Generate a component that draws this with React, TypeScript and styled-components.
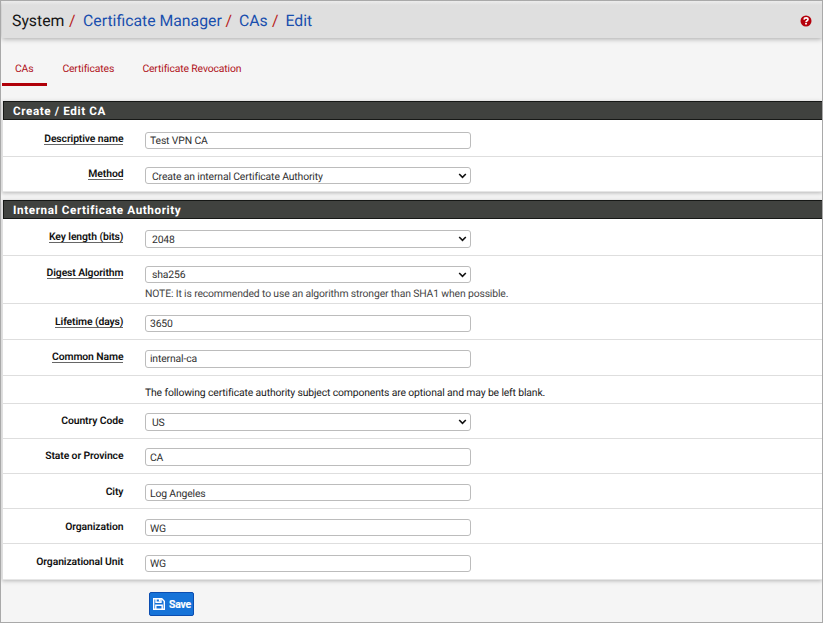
import React from "react";
import styled, { createGlobalStyle } from "styled-components";

const Global = createGlobalStyle`
  * { box-sizing: border-box; }
  body {
    margin: 0;
    background: #f5f5f5;
    font-family: Roboto, "Liberation Sans", sans-serif;
    text-rendering: geometricPrecision;
  }
`;

const Frame = styled.div`
  width: 823px;
  height: 623px;
  border: 1px solid #a9a9a9;
  background: #f5f5f5;
  overflow: hidden;
  color: #212121;
  font-size: 10.4px;
  letter-spacing: -0.145px;
`;

const Header = styled.header`
  height: 37px;
  margin-left: 1px;
  padding: 2px 10px 0 10px;
  display: flex;
  align-items: center;
  justify-content: space-between;
  background: linear-gradient(#ececec, #dfdfdf 4px);
  box-shadow: 0 1px 5px rgba(0, 0, 0, 0.32);
`;

const Trail = styled.nav`
  display: flex;
  font-size: 15.8px;
  letter-spacing: 0;
  line-height: 20px;
  white-space: pre;
`;

const Crumb = styled.span<{ $link?: boolean; $width: number }>`
  width: ${(p) => p.$width}px;
  color: ${(p) => (p.$link ? "#1a4fae" : "#151515")};
`;

const Slash = styled.span<{ $width: number }>`
  width: ${(p) => p.$width}px;
  color: #b71c1c;
`;

const Tabs = styled.nav`
  display: flex;
  height: 48px;
  margin-left: 1px;
`;

const Tab = styled.a<{ $active?: boolean; $width: number }>`
  width: ${(p) => p.$width}px;
  padding: 24px 0 0 13px;
  line-height: 14px;
  color: #b01018;
  white-space: nowrap;
  border-bottom: 3px solid ${(p) => (p.$active ? "#b00008" : "transparent")};

  & + & {
    padding-left: 15.4px;
  }
`;

const Panel = styled.section<{ $top: number }>`
  margin: ${(p) => p.$top}px 0 0 1px;
  background: #fff;
  border-left: 1px solid #e0e0e0;
  box-shadow: 0 1px 4px rgba(0, 0, 0, 0.26);
`;

const PanelTitle = styled.h2`
  margin: 0;
  height: 19px;
  padding-left: 9px;
  border: 1px solid #161816;
  border-right: 0;
  background: #40423f;
  color: #fff;
  font-size: 11.7px;
  font-weight: 700;
  letter-spacing: 0.6px;
  line-height: 18px;
`;

const Row = styled.div<{ $height: number }>`
  height: ${(p) => p.$height}px;
  display: grid;
  grid-template-columns: 120.4px 21.6px 326px 1fr;
  border-bottom: 1px solid #dedede;

  &:last-child {
    border-bottom-color: #e6e6e6;
  }
`;

const LabelCell = styled.div<{ $offset: number }>`
  padding-top: ${(p) => p.$offset}px;
  text-align: right;
`;

const Label = styled.label<{ $required?: boolean }>`
  display: block;
  width: max-content;
  margin-left: auto;
  line-height: 14px;
  height: 13px;
  font-weight: 600;
  letter-spacing: -0.11px;
  color: #111;
  white-space: nowrap;
  border-bottom: 1px solid ${(p) => (p.$required ? "#666" : "transparent")};
`;

const Field = styled.div<{ $offset: number }>`
  grid-column: 3;
  padding-top: ${(p) => p.$offset}px;
`;

const Box = styled.div<{ $select?: boolean; $height: number; $inset: number }>`
  height: ${(p) => p.$height}px;
  display: flex;
  justify-content: space-between;
  padding: ${(p) => p.$inset}px 3px 0 ${(p) => (p.$select ? 6 : 4)}px;
  border: 1px solid #bcbcbc;
  border-radius: 3px;
  background: #fff;
  color: #303030;
  line-height: 14px;

  svg {
    margin-top: ${(p) => 5 - p.$inset}px;
  }
`;

const Note = styled.div<{ $dark?: boolean }>`
  padding-top: ${(p) => (p.$dark ? 1 : 4)}px;
  line-height: 14px;
  color: ${(p) => (p.$dark ? "#212121" : "#454545")};
  white-space: nowrap;
`;

const SaveButton = styled.button`
  display: flex;
  align-items: center;
  gap: 4px;
  width: 45px;
  height: 24px;
  margin: 12px 0 0 148px;
  padding: 0 2px 0 3px;
  border: 1px solid #0b4db0;
  border-radius: 2px;
  background: #1673d8;
  color: #fff;
  font: 600 10.4px Roboto, sans-serif;
  letter-spacing: -0.135px;
  -webkit-text-stroke: 0.2px #fff;

  svg {
    flex: none;
  }
`;

const Chevron = () => (
  <svg width="9" height="6" viewBox="0 0 9 6">
    <path d="M1.2 1 L4.5 4.3 L7.8 1" fill="none" stroke="#111" strokeWidth="1.6" />
  </svg>
);

const HelpIcon = () => (
  <svg width="12" height="12" viewBox="0 0 12 12">
    <circle cx="6" cy="6" r="5.5" fill="#b5000b" />
    <path d="M4 4.6 C4.2 2.3 8 2.4 8 4.5 C8 5.8 6 5.7 6 7.2" fill="none" stroke="#fff" strokeWidth="1.6" />
    <rect x="5.1" y="8" width="1.8" height="1.5" fill="#fff" />
  </svg>
);

const SaveIcon = () => (
  <svg width="12" height="12" viewBox="0 0 12 12" fill="none" stroke="#fff" strokeWidth="1.4">
    <path d="M0.7 0.7 H8.8 L11.3 3.2 V11.3 H0.7 Z" />
    <path d="M3 0.7 V4.3 H8 V0.7 M2.8 11 V7.2 H9.2 V11" />
    <path d="M6.6 1 V3.6" />
  </svg>
);

type RowData = {
  label?: string;
  required?: boolean;
  value?: string;
  select?: boolean;
  note?: string;
  height: number;
  labelTop: number;
  top: number;
  box?: number;
  inset?: number;
};

const general: RowData[] = [
  { label: "Descriptive name", required: true, value: "Test VPN CA", height: 37, labelTop: 12, top: 12, box: 17, inset: 1 },
  { label: "Method", required: true, value: "Create an internal Certificate Authority", select: true, height: 35, labelTop: 10, top: 10, box: 17 },
];

const internal: RowData[] = [
  { label: "Key length (bits)", required: true, value: "2048", select: true, height: 37, labelTop: 11, top: 11 },
  { label: "Digest Algorithm", required: true, value: "sha256", select: true, note: "NOTE: It is recommended to use an algorithm stronger than SHA1 when possible.", height: 48, labelTop: 10, top: 10, box: 17, inset: 1 },
  { label: "Lifetime (days)", required: true, value: "3650", height: 36, labelTop: 11, top: 11, box: 17, inset: 1 },
  { label: "Common Name", required: true, value: "internal-ca", height: 36, labelTop: 10, top: 10, inset: 1 },
  { note: "The following certificate authority subject components are optional and may be left blank.", height: 28, labelTop: 0, top: 9 },
  { label: "Country Code", value: "US", select: true, height: 35, labelTop: 10, top: 9 },
  { label: "State or Province", value: "CA", height: 35, labelTop: 10, top: 9 },
  { label: "City", value: "Log Angeles", height: 35, labelTop: 11, top: 10, box: 17 },
  { label: "Organization", value: "WG", height: 35, labelTop: 11, top: 10, box: 17 },
  { label: "Organizational Unit", value: "WG", height: 36, labelTop: 11, top: 11, box: 17, inset: 1 },
];

const FormRow = ({ row }: { row: RowData }) => (
  <Row $height={row.height}>
    <LabelCell $offset={row.labelTop}>{row.label && <Label $required={row.required}>{row.label}</Label>}</LabelCell>
    <Field $offset={row.top}>
      {row.value && (
        <Box $select={row.select} $height={row.box ?? 18} $inset={row.inset ?? 2}>
          {row.value}
          {row.select && <Chevron />}
        </Box>
      )}
      {row.note && <Note $dark={!row.value}>{row.note}</Note>}
    </Field>
  </Row>
);

export default function App() {
  return (
    <>
      <Global />
      <Frame>
        <Header>
          <Trail>
            <Crumb $width={57}>System</Crumb>
            <Slash $width={14}>/</Slash>
            <Crumb $link $width={142.5}>Certificate Manager</Crumb>
            <Slash $width={13.5}>/</Slash>
            <Crumb $link $width={33}>CAs</Crumb>
            <Slash $width={13.5}>/</Slash>
            <Crumb $link $width={40}>Edit</Crumb>
          </Trail>
          <HelpIcon />
        </Header>
        <Tabs>
          <Tab $active $width={45}>CAs</Tab>
          <Tab $width={80}>Certificates</Tab>
          <Tab $width={130}>Certificate Revocation</Tab>
        </Tabs>
        <Panel $top={15}>
          <PanelTitle>Create / Edit CA</PanelTitle>
          {general.map((row) => <FormRow key={row.label} row={row} />)}
        </Panel>
        <Panel $top={8}>
          <PanelTitle>Internal Certificate Authority</PanelTitle>
          {internal.map((row, i) => <FormRow key={i} row={row} />)}
        </Panel>
        <SaveButton><SaveIcon />Save</SaveButton>
      </Frame>
    </>
  );
}
